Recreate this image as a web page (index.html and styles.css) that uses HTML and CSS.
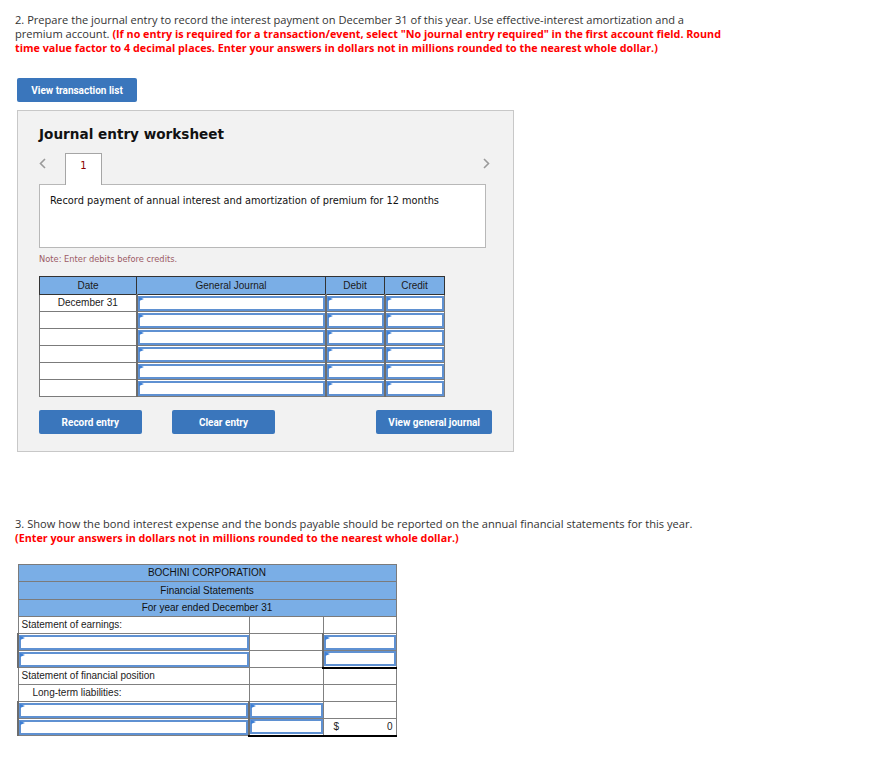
FILE: index.html
```html
<!DOCTYPE html>
<html lang="en">
<head>
<meta charset="utf-8">
<title>Journal entry worksheet</title>
<link rel="stylesheet" href="styles.css">
</head>
<body>
<div class="page">
  <p class="prose">2. Prepare the journal entry to record the interest payment on December 31 of this year. Use effective-interest amortization and a<br>premium account. <b class="req">(If no entry is required for a transaction/event, select "No journal entry required" in the first account field. Round<br>time value factor to 4 decimal places. Enter your answers in dollars not in millions rounded to the nearest whole dollar.)</b></p>

  <button class="btn btn-list" type="button">View transaction list</button>

  <section class="panel">
    <h2 class="ws-title">Journal entry worksheet</h2>
    <div class="tabs">
      <span class="chev"><svg width="7" height="11" viewBox="0 0 7 11"><polyline points="6,1 1.5,5.5 6,10" fill="none" stroke="#9a9a9a" stroke-width="1.6"/></svg></span>
      <div class="tab">1</div>
      <span class="chev chev-r"><svg width="7" height="11" viewBox="0 0 7 11"><polyline points="1,1 5.5,5.5 1,10" fill="none" stroke="#9a9a9a" stroke-width="1.6"/></svg></span>
    </div>
    <div class="desc">Record payment of annual interest and amortization of premium for 12 months</div>
    <p class="note">Note: Enter debits before credits.</p>

    <table class="jt">
      <colgroup><col class="c-date"><col class="c-acct"><col class="c-dr"><col class="c-cr"></colgroup>
      <thead>
        <tr><th>Date</th><th>General Journal</th><th>Debit</th><th>Credit</th></tr>
      </thead>
      <tbody>
        <tr><td class="date">December 31</td><td class="in"><div class="fld"></div></td><td class="in"><div class="fld"></div></td><td class="in"><div class="fld"></div></td></tr>
        <tr><td class="date"></td><td class="in"><div class="fld"></div></td><td class="in"><div class="fld"></div></td><td class="in"><div class="fld"></div></td></tr>
        <tr><td class="date"></td><td class="in"><div class="fld"></div></td><td class="in"><div class="fld"></div></td><td class="in"><div class="fld"></div></td></tr>
        <tr><td class="date"></td><td class="in"><div class="fld"></div></td><td class="in"><div class="fld"></div></td><td class="in"><div class="fld"></div></td></tr>
        <tr><td class="date"></td><td class="in"><div class="fld"></div></td><td class="in"><div class="fld"></div></td><td class="in"><div class="fld"></div></td></tr>
        <tr><td class="date"></td><td class="in"><div class="fld"></div></td><td class="in"><div class="fld"></div></td><td class="in"><div class="fld"></div></td></tr>
      </tbody>
    </table>

    <div class="actions">
      <button class="btn btn-rec" type="button">Record entry</button>
      <button class="btn btn-clr" type="button">Clear entry</button>
      <button class="btn btn-gj" type="button">View general journal</button>
    </div>
  </section>

  <p class="prose q3">3. Show how the bond interest expense and the bonds payable should be reported on the annual financial statements for this year.<br><b class="req">(Enter your answers in dollars not in millions rounded to the nearest whole dollar.)</b></p>

  <table class="ft">
    <colgroup><col class="f1"><col class="f2"><col class="f3"></colgroup>
    <thead>
      <tr><th colspan="3" class="h17">BOCHINI CORPORATION</th></tr>
      <tr><th colspan="3" class="h18">Financial Statements</th></tr>
      <tr><th colspan="3" class="h17">For year ended December 31</th></tr>
    </thead>
    <tbody>
      <tr><td class="lbl">Statement of earnings:</td><td></td><td></td></tr>
      <tr><td class="in"><div class="fld"></div></td><td></td><td class="in"><div class="fld"></div></td></tr>
      <tr><td class="in"><div class="fld"></div></td><td></td><td class="in total"><div class="fld"></div></td></tr>
      <tr><td class="lbl">Statement of financial position</td><td></td><td></td></tr>
      <tr><td class="lbl ind">Long-term liabilities:</td><td></td><td></td></tr>
      <tr><td class="in"><div class="fld"></div></td><td class="in"><div class="fld"></div></td><td></td></tr>
      <tr><td class="in"><div class="fld"></div></td><td class="in total"><div class="fld"></div></td><td class="sum total"><span>$</span><span>0</span></td></tr>
    </tbody>
  </table>
</div>
</body>
</html>
```
FILE: styles.css
```css
* { box-sizing: border-box; }
body { margin: 0; background: #fff; font-family: "Open Sans", Lato, sans-serif; }
.page { padding: 13px 0 20px 15px; }

.prose { margin: 0; font-size: 11.1px; line-height: 14px; color: #333; white-space: nowrap; }
.req { color: #f00; font-weight: 700; font-size: 10.75px; }

.btn {
  display: block; border: 0; border-radius: 2px; background: #3a76bc; color: #fff;
  font: 700 10px "Liberation Sans Narrow", Roboto, sans-serif; height: 24px; padding: 0; cursor: pointer;
}
.btn-list { margin: 23px 0 0 2px; width: 120px; }

.panel {
  margin: 8px 0 0 2px; width: 497px; background: #f2f2f2; border: 1px solid #c8c8c8;
  padding: 13px 21px 17px;
}
.ws-title { margin: 0; font: 700 13.6px/20px "DejaVu Sans", Verdana, sans-serif; color: #111; }

.tabs { display: flex; align-items: flex-start; margin-top: 9px; height: 31px; }
.chev { display: block; width: 7px; height: 11px; margin-top: 5px; }
.chev svg { display: block; }
.chev-r { margin-left: auto; margin-right: 2px; }
.tab {
  position: relative; z-index: 1; width: 37px; height: 32px; margin-left: 19px;
  background: #fff; border: 1px solid #a6a6a6; border-bottom: 0;
  text-align: center; padding-top: 6px; font: 10px/12px "DejaVu Sans", Verdana, sans-serif; color: #8b0000;
}
.desc {
  width: 447px; height: 64px; background: #fff; border: 1px solid #b8b8b8;
  padding: 10px 10px 0; font: 9.8px/12px "DejaVu Sans", Verdana, sans-serif; color: #111;
}
.note { margin: 6px 0 0; font: 8.3px/10px "DejaVu Sans", Verdana, sans-serif; color: #9c5b66; }

.jt {
  border-collapse: collapse; table-layout: fixed; width: 405px; margin-top: 12px;
  font: 10px/12px "Liberation Sans", Arial, sans-serif; color: #1a1a1a;
}
.c-date { width: 97px; } .c-acct { width: 189px; } .c-dr { width: 59px; } .c-cr { width: 60px; }
.jt th { background: #7aaee6; border: 1px solid #333; height: 18px; font-weight: 400; padding: 0; }
.jt td { border: 1px solid #7b7b7b; height: 17px; padding: 0; background: #fff; }
.jt td.date { text-align: center; }
.jt td.in, .ft td.in { border-left: 2px solid #6d6d6d; }

.fld { position: relative; height: 15px; border: 2px solid #5f91d2; background: #fff; }
.fld::before {
  content: ""; position: absolute; top: -1px; left: -1px;
  border-left: 5px solid #3d7fd6; border-top: 2.5px solid transparent; border-bottom: 2.5px solid transparent;
}

.actions { display: flex; margin-top: 13px; }
.btn-rec { width: 103px; }
.btn-clr { width: 104px; margin-left: 30px; }
.btn-gj { width: 116px; margin-left: 101px; }

.q3 { margin-top: 65px; }

.ft {
  border-collapse: collapse; table-layout: fixed; width: 378px; margin: 19px 0 0 2px;
  font: 10px/12px "Liberation Sans", Arial, sans-serif; color: #222;
}
.f1 { width: 231px; } .f2 { width: 74px; } .f3 { width: 73px; }
.ft th { background: #7aaee6; border: 1px solid #7b7b7b; font-weight: 400; padding: 0; color: #111; }
.ft th.h17 { height: 17px; }
.ft th.h18 { height: 18px; }
.ft td { border: 1px solid #808080; height: 17px; padding: 0; background: #fff; }
.ft td.lbl { padding-left: 3px; }
.ft td.ind { padding-left: 14px; }
.ft td.total { border-bottom: 2px solid #000; }
.ft td.sum span:first-child { padding-left: 10px; }
.ft td.sum span:last-child { float: right; padding-right: 3px; }
```
